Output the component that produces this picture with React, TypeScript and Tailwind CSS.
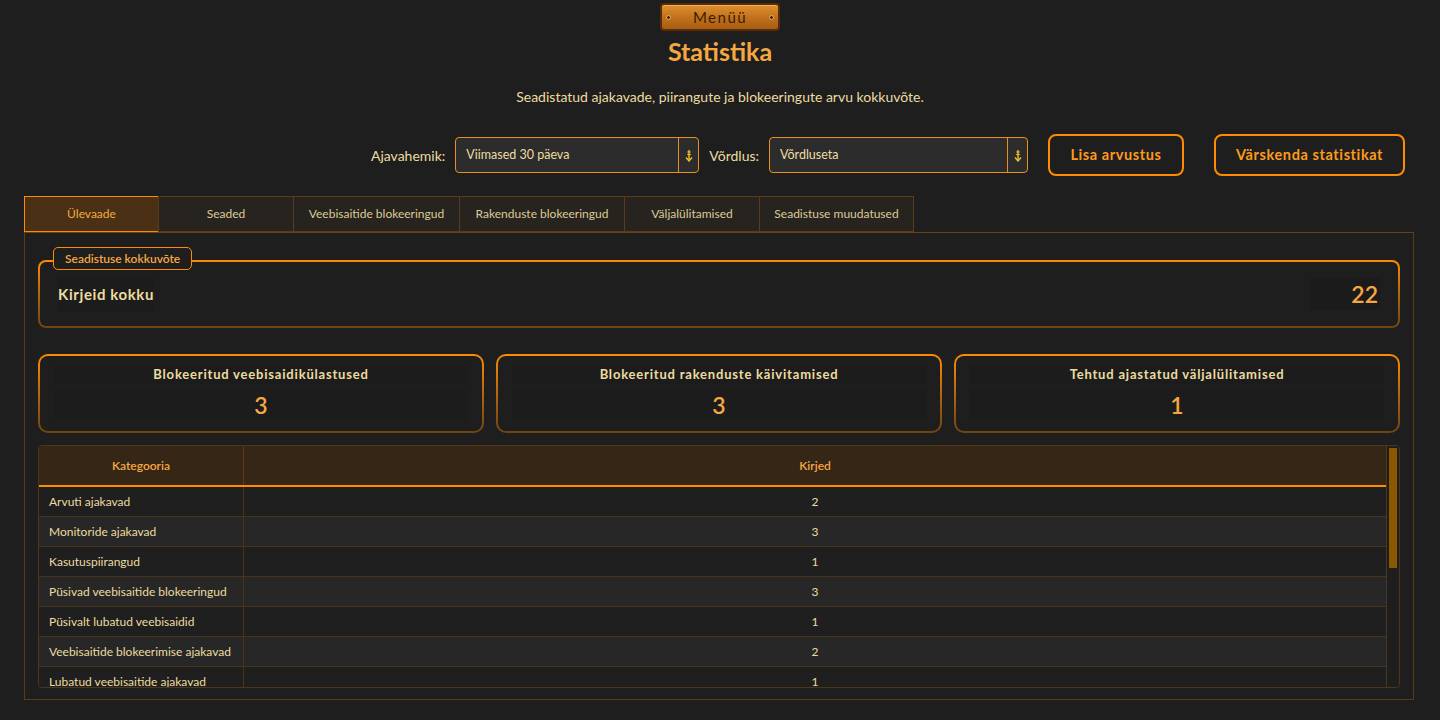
import React from "react";

const tabs = [
  { label: "Ülevaade", w: "w-[135px]", active: true },
  { label: "Seaded", w: "w-[136px]" },
  { label: "Veebisaitide blokeeringud", w: "w-[167px]" },
  { label: "Rakenduste blokeeringud", w: "w-[166px]" },
  { label: "Väljalülitamised", w: "w-[136px]" },
  { label: "Seadistuse muudatused", w: "w-[155px]" },
];

const cards = [
  { title: "Blokeeritud veebisaidikülastused", value: 3 },
  { title: "Blokeeritud rakenduste käivitamised", value: 3 },
  { title: "Tehtud ajastatud väljalülitamised", value: 1 },
];

const rows = [
  { name: "Arvuti ajakavad", count: 2 },
  { name: "Monitoride ajakavad", count: 3 },
  { name: "Kasutuspiirangud", count: 1 },
  { name: "Püsivad veebisaitide blokeeringud", count: 3 },
  { name: "Püsivalt lubatud veebisaidid", count: 1 },
  { name: "Veebisaitide blokeerimise ajakavad", count: 2 },
  { name: "Lubatud veebisaitide ajakavad", count: 1 },
];

const DropArrow = () => (
  <svg width="8" height="13" viewBox="0 0 8 13" className="block">
    <path d="M4 1 V11" stroke="#e8c030" strokeWidth="1.4" />
    <path d="M2.2 3 H5.8 M2.2 5.5 H5.8" stroke="#e8c030" strokeWidth="1" />
    <path d="M1 8.5 L4 12 L7 8.5" stroke="#e8c030" strokeWidth="1.4" fill="none" />
  </svg>
);

const Combo = ({ value, w }: { value: string; w: string }) => (
  <div
    className={`flex h-[36px] ${w} items-stretch rounded-[4px] border border-[#e8901c] bg-[#2c2c2c]`}
  >
    <div className="flex flex-1 items-center pl-[10px] text-[12.5px] text-[#ecdca0]">
      {value}
    </div>
    <div className="flex w-[20px] items-center justify-center border-l border-[#e8901c]">
      <DropArrow />
    </div>
  </div>
);

const OutlineButton = ({ label, w }: { label: string; w: string }) => (
  <button
    className={`h-[42px] ${w} rounded-[8px] border-2 border-[#ff8c00] bg-transparent text-[14.5px] font-bold tracking-[0.6px] text-[#ff9a1a]`}
  >
    {label}
  </button>
);

export default function App() {
  return (
    <div
      className="flex h-[720px] w-[1440px] flex-col overflow-hidden bg-[#1e1e1e]"
      style={{ fontFamily: 'Lato, "Noto Sans", sans-serif' }}
    >
      {/* Menüü nupp */}
      <div className="flex justify-center pt-[3px]">
        <div className="relative flex h-[28px] w-[120px] items-center justify-center rounded-[4px] border-2 border-[#5a2c05] bg-gradient-to-b from-[#e0902e] via-[#c2721c] to-[#a85c14] shadow-[inset_0_1px_0_#f0b060]">
          <span className="absolute left-[4px] top-[10px] h-[5px] w-[5px] rounded-full border border-[#f0b060] bg-[#4a2505]" />
          <span className="text-[15px] tracking-[1.5px] text-[#3a1d02]">Menüü</span>
          <span className="absolute right-[4px] top-[10px] h-[5px] w-[5px] rounded-full border border-[#f0b060] bg-[#4a2505]" />
        </div>
      </div>

      <h1 className="mt-[2px] text-center text-[25px] font-bold leading-[36px] text-[#f5a842]">
        Statistika
      </h1>
      <p className="mt-[19px] text-center text-[14px] leading-[18px] text-[#ecdca0]">
        Seadistatud ajakavade, piirangute ja blokeeringute arvu kokkuvõte.
      </p>

      {/* Filtrid */}
      <div className="mt-[28px] flex items-center justify-end pr-[35px]">
        <span className="mr-[10px] text-[14px] text-[#ecdca0]">Ajavahemik:</span>
        <Combo value="Viimased 30 päeva" w="w-[244px]" />
        <span className="ml-[10px] mr-[10px] text-[14px] text-[#ecdca0]">Võrdlus:</span>
        <Combo value="Võrdluseta" w="w-[259px]" />
        <div className="ml-[20px]">
          <OutlineButton label="Lisa arvustus" w="w-[136px]" />
        </div>
        <div className="ml-[30px]">
          <OutlineButton label="Värskenda statistikat" w="w-[191px]" />
        </div>
      </div>

      {/* Vahelehed */}
      <div className="ml-[24px] mt-[20px] flex h-[37px] w-[1390px] border-b border-[#6a4212]">
        {tabs.map((t) => (
          <div
            key={t.label}
            className={`flex ${t.w} items-center justify-center border text-[12px] ${
              t.active
                ? "border-[#ff8c00] bg-[#4a3014] text-[#f5a842]"
                : "-ml-px border-[#5a3c18] bg-[#27231e] text-[#dccb98]"
            }`}
          >
            {t.label}
          </div>
        ))}
      </div>

      {/* Paneel */}
      <div className="ml-[24px] flex h-[467px] w-[1390px] flex-col border-x border-b border-[#5a3c14] px-[13px] pt-[14px]">
        {/* Seadistuse kokkuvõte */}
        <div className="relative pt-[13px]">
          <div className="absolute left-[15px] top-0 z-10 flex h-[23px] items-center rounded-[5px] border border-[#ff8c00] bg-[#1e1e1e] px-[11px] text-[12px] font-semibold text-[#f5a842]">
            Seadistuse kokkuvõte
          </div>
          <div className="rounded-[8px] bg-gradient-to-b from-[#ff8c00] to-[#6e4410] p-[2px]">
            <div className="flex h-[64px] items-center justify-between rounded-[6px] bg-[#1e1e1e] pl-[18px] pr-[18px]">
              <span className="bg-[#1c1c1c] py-[6px] text-[15px] font-bold tracking-[0.6px] text-[#ecdca0]">
                Kirjeid kokku
              </span>
              <span className="flex h-[32px] w-[70px] items-center justify-end bg-[#1b1b1b] pr-[2px] text-[23px] font-semibold text-[#f5a842]">
                22
              </span>
            </div>
          </div>
        </div>

        {/* Kaardid */}
        <div className="mt-[26px] grid grid-cols-3 gap-[12px]">
          {cards.map((c) => (
            <div
              key={c.title}
              className="rounded-[10px] bg-gradient-to-b from-[#ff8c00] to-[#6e4410] p-[2px]"
            >
              <div className="flex h-[75px] flex-col rounded-[8px] bg-[#1e1e1e] px-[14px] pt-[10px]">
                <div className="flex h-[18px] items-center justify-center bg-[#1c1c1c] text-[13px] font-bold tracking-[0.8px] text-[#ecdca0]">
                  {c.title}
                </div>
                <div className="mt-[5px] flex h-[32px] items-center justify-center bg-[#1c1c1c] text-[23px] font-semibold text-[#f5a842]">
                  {c.value}
                </div>
              </div>
            </div>
          ))}
        </div>

        {/* Tabel */}
        <div className="mt-[12px] flex h-[243px] overflow-hidden rounded-[4px] border border-[#4e3618]">
          <div className="flex-1 overflow-hidden">
            <div className="flex h-[41px] border-b-2 border-[#ff8c00] bg-[#352616] text-[12px] font-semibold text-[#f5a842]">
              <div className="flex w-[205px] items-center justify-center border-r border-[#5a3c18]">
                Kategooria
              </div>
              <div className="flex flex-1 items-center justify-center">Kirjed</div>
            </div>
            {rows.map((r, i) => (
              <div
                key={r.name}
                className={`flex h-[30px] border-b border-[#4a3418] text-[12px] text-[#ecdca0] ${
                  i % 2 === 0 ? "bg-[#1f1f1f]" : "bg-[#272727]"
                }`}
              >
                <div className="flex w-[205px] items-center whitespace-nowrap border-r border-[#4a3418] pl-[10px]">
                  {r.name}
                </div>
                <div className="flex flex-1 items-center justify-center">{r.count}</div>
              </div>
            ))}
          </div>
          <div className="w-[13px] border-l border-[#4e3618] bg-[#1e1e1e] px-[2px] pt-[2px]">
            <div className="h-[120px] bg-[#8a5800]" />
          </div>
        </div>
      </div>
    </div>
  );
}
